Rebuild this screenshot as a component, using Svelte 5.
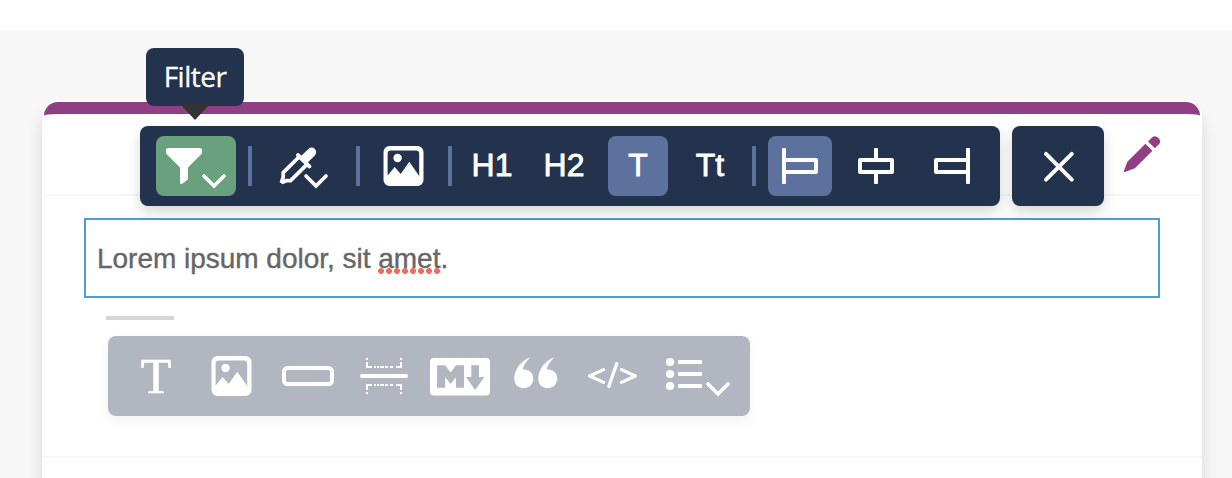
<script>
  const picture =
    'M389.5 146H417.5a6 6 0 0 1 6 6V180a6 6 0 0 1-6 6H389.5a6 6 0 0 1-6-6V152a6 6 0 0 1 6-6ZM387.6 175.5L394.7 167L400.7 174L409.3 161.7L419.2 176V154a3.3 3.3 0 0 0-3.3-3.4H391a3.3 3.3 0 0 0-3.4 3.4Z';
  const quote =
    'M530.3 357.2C521 361 514.3 369 514.3 378.5C514.3 384.5 518.3 388.3 523.6 388.3C529.3 388.3 533.3 384 533.3 378.6C533.3 373.2 529.3 369.6 524 369.6C523.5 369.6 523 369.6 522.6 369.8C523.4 365.2 526.3 361 530.3 357.2Z';
</script>

<div class="page">
  <section class="card">
    <div class="inner">
      <header>
        <button class="edit" aria-label="Edit">
          <svg viewBox="1122 134 40 40" width="40" height="40">
            <path d="M1145.4 143.8L1152.4 150.8L1135.6 167.4Q1134.6 168.4 1133 169L1125 171.9Q1123.4 172.2 1124 170.6L1127 162.8Q1127.5 161.5 1128.3 160.8Z" />
            <path d="M1148 141.4L1152 137.4Q1154.8 134.8 1158.2 137.7Q1161.8 141.2 1158.9 144.3L1154.9 148.3Z" />
          </svg>
        </button>
      </header>
      <main>
        <div class="text">Lorem ipsum dolor, sit <span class="typo">amet</span>.</div>
        <div class="rule"></div>
        <div class="bar blocks">
          <button class="serif">T</button>
          <button aria-label="Image">
            <svg viewBox="372 136 64 60" width="64" height="60"><path fill-rule="evenodd" d={picture} /><circle cx="397.6" cy="158" r="4.2" /></svg>
          </button>
          <button aria-label="Button">
            <svg viewBox="276 346 64 60" width="64" height="60" class="line"><rect x="284" y="368" width="48" height="16" rx="3.5" /></svg>
          </button>
          <button aria-label="Divider">
            <svg viewBox="352 346 64 60" width="64" height="60">
              <rect x="360" y="374" width="48" height="4" rx="2" />
              <g id="dots">
                <path d="M366 358h2v2h-2zM400 358h2v2h-2zM366 362h2v4h4v2h-6zM402 362h-2v4h-4v2h6zM374 366h2v2h-2zM377 366h2v2h-2zM380 366h4v2h-4zM385 366h3v2h-3zM390 366h3v2h-3z" />
              </g>
              <use href="#dots" transform="translate(0 752) scale(1 -1)" />
            </svg>
          </button>
          <button aria-label="Markdown">
            <svg viewBox="428 346 64 60" width="64" height="60">
              <path fill-rule="evenodd" d="M434 358H486a4 4 0 0 1 4 4V391.5a4 4 0 0 1-4 4H434a4 4 0 0 1-4-4V362a4 4 0 0 1 4-4ZM437 365.3V387.8H445.2V377.2L450.6 384L456 377.2V387.8H464V365.3H456L450.6 372.4L445.2 365.3ZM471.3 365.3V377H466L475.1 390L484.4 377H479V365.3Z" />
            </svg>
          </button>
          <button aria-label="Quote">
            <svg viewBox="504 346 64 60" width="64" height="60"><path d={quote} /><path d={quote} transform="translate(24 0)" /></svg>
          </button>
          <button aria-label="Code">
            <svg viewBox="580 346 64 60" width="64" height="60" class="line thin"><path d="M603.6 369.6L589.6 376L603.6 382.4M616.8 363.6L608.8 386.4M621.4 369.6L635.4 376L621.4 382.4" /></svg>
          </button>
          <button class="list" aria-label="List">
            <svg viewBox="656 346 78 60" width="78" height="60">
              <circle cx="670" cy="362" r="4.1" /><circle cx="670" cy="374" r="4.1" /><circle cx="670" cy="386" r="4.1" />
              <rect x="678" y="360" width="24" height="4" rx="1" /><rect x="678" y="372" width="24" height="4" rx="1" /><rect x="678" y="384" width="24" height="4" rx="1" />
              <path class="line chevron" d="M708 384L718 394L728 384" />
            </svg>
          </button>
        </div>
      </main>
    </div>
    <div class="floating">
      <div class="bar format">
        <button class="wide green" aria-label="Filter">
          <svg viewBox="156 136 80 60" width="80" height="60">
            <path d="M168 148H200Q202 148 202 150V152.2Q202 153.4 201 154.4L188.7 166.8Q188 167.5 188 168.5V178.2Q188 179.3 187.2 180L182.6 183.6Q180 184.8 180 182.5V168.5Q180 167.5 179.3 166.8L167 154.4Q166 153.4 166 152.2V150Q166 148 168 148Z" />
            <path class="line chevron" d="M204 176L214 186L224 176" />
          </svg>
          <span class="tooltip">Filter</span>
        </button>
        <i></i>
        <button class="wide" aria-label="Colour">
          <svg viewBox="264 136 80 60" width="80" height="60">
            <path class="line chevron" d="M299.5 156.5L283.2 172.6V177L281.8 181.4L283 182.2L286.6 180.6H290.6L307 164.4" />
            <path class="line" d="M298 155.2L309.4 166.4" />
            <path d="M299.5 157.5L308.4 149Q312 146.2 314.8 149Q317.6 152 314.8 155.4L306.2 164Z" />
            <path class="line chevron" d="M306 176L316 186L326 176" />
          </svg>
        </button>
        <i></i>
        <button aria-label="Image"><svg viewBox="372 136 64 60" width="64" height="60"><path fill-rule="evenodd" d={picture} /><circle cx="397.6" cy="158" r="4.2" /></svg></button>
        <i></i>
        <button class="h1">H1</button>
        <button class="h2">H2</button>
        <button class="square on">T</button>
        <button class="square">Tt</button>
        <i></i>
        <button class="on" aria-label="Align left">
          <svg viewBox="768 136 64 60" width="64" height="60"><rect x="782" y="148" width="4" height="36" rx="1" /><rect class="line" x="784" y="160" width="32" height="12" /></svg>
        </button>
        <button aria-label="Align center">
          <svg viewBox="844 136 64 60" width="64" height="60"><path d="M874 149q0-1 1-1h2q1 0 1 1v9h-4zM874 174h4v9q0 1-1 1h-2q-1 0-1-1z" /><rect class="line" x="860" y="160" width="32" height="12" /></svg>
        </button>
        <button aria-label="Align right">
          <svg viewBox="920 136 64 60" width="64" height="60"><rect x="966" y="148" width="4" height="36" rx="1" /><rect class="line" x="936" y="160" width="32" height="12" /></svg>
        </button>
      </div>
      <button class="bar close" aria-label="Close">
        <svg viewBox="1012 126 92 80" width="92" height="80" class="line"><path d="M1046 153.8L1071.8 179.6M1071.8 153.8L1046 179.6" /></svg>
      </button>
    </div>
  </section>
</div>

<style>
  :global(body) { margin: 0; background: #fff; overflow: hidden; }
  :global(#app) { display: flow-root; }
  .page {
    box-sizing: border-box;
    height: 448px;
    margin-top: 30px;
    padding: 70px 30px 0 42px;
    background: #f7f7f7;
    overflow: hidden;
    font-family: "Liberation Sans", Arial, sans-serif;
  }
  .card {
    position: relative;
    box-sizing: border-box;
    height: 420px;
    padding: 2px 0 0;
    background: #fff;
    border-radius: 16px;
    box-shadow: 0 12px 16px rgba(0, 0, 0, 0.12);
  }
  .inner { border-top: 12px solid #903f84; border-radius: 14px 14px 0 0; margin: 0 2px; }
  header {
    display: flex;
    justify-content: flex-end;
    box-sizing: border-box;
    height: 82px;
    padding: 20px 38px 0 0;
    border-bottom: 2px solid #f7f7f7;
  }
  main {
    box-sizing: border-box;
    height: 262px;
    margin: 0 -2px;
    padding: 22px 42px 0;
    border-bottom: 2px solid #f7f7f7;
  }
  .text {
    box-sizing: border-box;
    height: 80px;
    padding-left: 11px;
    border: 2px solid #4c9cd6;
    font-size: 28px;
    line-height: 77px;
    letter-spacing: -0.02px;
    color: #666;
    -webkit-text-stroke: 0.4px #666;
    white-space: nowrap;
  }
  .typo { position: relative; }
  .typo::after {
    content: "";
    position: absolute;
    left: -1px;
    bottom: 0;
    width: 64px;
    height: 6px;
    background: radial-gradient(circle at 4px 3px, #ee6b5d 2.6px, transparent 3.3px) 0 0 / 8px 6px;
  }
  .rule { width: 68px; height: 4px; margin: 18px 0 16px 22px; background: #d5d5d5; }
  button {
    flex: none;
    display: flex;
    align-items: center;
    justify-content: center;
    width: 64px;
    height: 60px;
    padding: 0;
    border: 0;
    border-radius: 8px;
    background: none;
    color: #fff;
    font: 32px/56px "Liberation Sans", Arial, sans-serif;
    -webkit-text-stroke: 0.8px #fff;
  }
  .square, .h1, .h2 { padding-bottom: 2px; }
  svg { display: block; fill: #fff; }
  .edit { width: 40px; height: 40px; }
  .edit svg { fill: #903f84; }
  .line { fill: none; stroke: #fff; stroke-width: 4; stroke-linecap: round; stroke-linejoin: round; }
  .chevron { stroke-width: 3.7; stroke-linejoin: miter; }
  .thin { stroke-width: 3.2; }
  .bar {
    display: flex;
    align-items: center;
    gap: 12px;
    box-sizing: border-box;
    height: 80px;
    padding: 10px 16px;
    border-radius: 8px;
    background: #24334d;
    box-shadow: 0 6px 14px rgba(0, 0, 0, 0.16);
  }
  .blocks { width: 642px; margin-left: 24px; background: #b2b6c1; box-shadow: 0 6px 14px rgba(0, 0, 0, 0.05); }
  .serif { font: 50px/60px "Liberation Serif", serif; -webkit-text-stroke: 0.5px #fff; }
  .list { width: 78px; }
  .floating { position: absolute; left: 98px; top: 26px; display: flex; gap: 12px; }
  .format { width: 860px; }
  .format i { flex: none; width: 4px; height: 40px; background: #5c719e; }
  .wide { position: relative; width: 80px; }
  .green { background: #69a07e; }
  .square { width: 60px; }
  .h1 { width: 56px; }
  .on { background: #5c719e; }
  .close { width: 92px; padding: 0; background: #24334d; }
  .tooltip {
    position: absolute;
    left: -10px;
    top: -88px;
    width: 98px;
    height: 58px;
    border-radius: 8px;
    background: #24334d;
    font: 28px/57px "Open Sans", sans-serif;
    letter-spacing: -0.5px;
    -webkit-text-stroke: 0.3px #fff;
    text-align: center;
  }
  .tooltip::after {
    content: "";
    position: absolute;
    left: 34px;
    top: 56px;
    border: 15px solid transparent;
    border-top: 16px solid #333;
    border-bottom: 0;
  }
</style>
